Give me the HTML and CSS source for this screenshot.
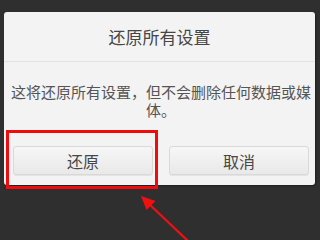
FILE: index.html
```html
<!DOCTYPE html>
<html lang="zh">
<head>
<meta charset="utf-8">
<link rel="stylesheet" href="styles.css">
</head>
<body>
<div class="screen">
  <div class="dialog">
    <div class="title">还原所有设置</div>
    <div class="divider"></div>
    <div class="message">这将还原所有设置，但不会删除任何数据或媒体。</div>
    <div class="actions">
      <button class="btn">还原</button>
      <button class="btn">取消</button>
    </div>
  </div>
  <div class="highlight"></div>
  <svg class="arrow" width="320" height="240" viewBox="0 0 320 240">
    <line x1="188" y1="241" x2="148" y2="203" stroke="#f01010" stroke-width="2.2"/>
    <polygon points="141,196 146.5,210 155.5,201" fill="#f01010"/>
  </svg>
</div>
</body>
</html>
```
FILE: styles.css
```css
html, body {
  margin: 0;
  padding: 0;
}
body {
  background: #2f2f2f;
  font-family: "Noto Sans CJK SC", "Noto Sans", sans-serif;
}
.screen {
  position: relative;
  width: 320px;
  height: 240px;
  overflow: hidden;
  padding-top: 12px;
  box-sizing: border-box;
}
.dialog {
  margin-left: 4px;
  width: 311px;
  height: 173px;
  box-sizing: border-box;
  background: #f3f3f3;
  border-radius: 3px;
  box-shadow: 1px 1px 2px rgba(0,0,0,0.35);
  display: flex;
  flex-direction: column;
}
.title {
  height: 49px;
  padding-top: 13px;
  box-sizing: border-box;
  text-align: center;
  font-size: 17px;
  line-height: 24px;
  color: #454545;
}
.divider {
  height: 1px;
  background: #e2e2e2;
}
.message {
  margin: 21px 0 0 5px;
  width: 304px;
  text-align: center;
  font-size: 15px;
  line-height: 18px;
  color: #555555;
  line-break: anywhere;
}
.actions {
  margin-top: 27px;
  padding: 0 6px 0 9px;
  display: flex;
  gap: 16px;
}
.btn {
  width: 140px;
  height: 29px;
  box-sizing: border-box;
  border: 1px solid #d9d9d9;
  border-radius: 3px;
  background: linear-gradient(#f6f6f6, #e9e9e9);
  font-family: "Noto Sans CJK SC", "Noto Sans", sans-serif;
  font-size: 16px;
  color: #474747;
  padding: 0;
  line-height: 26px;
  box-shadow: 0 1px 0 rgba(0,0,0,0.06);
}
.highlight {
  position: absolute;
  left: 6px;
  top: 130px;
  width: 152px;
  height: 59px;
  box-sizing: border-box;
  border: 3px solid #f00c0c;
}
.arrow {
  position: absolute;
  left: 0;
  top: 0;
}
```
